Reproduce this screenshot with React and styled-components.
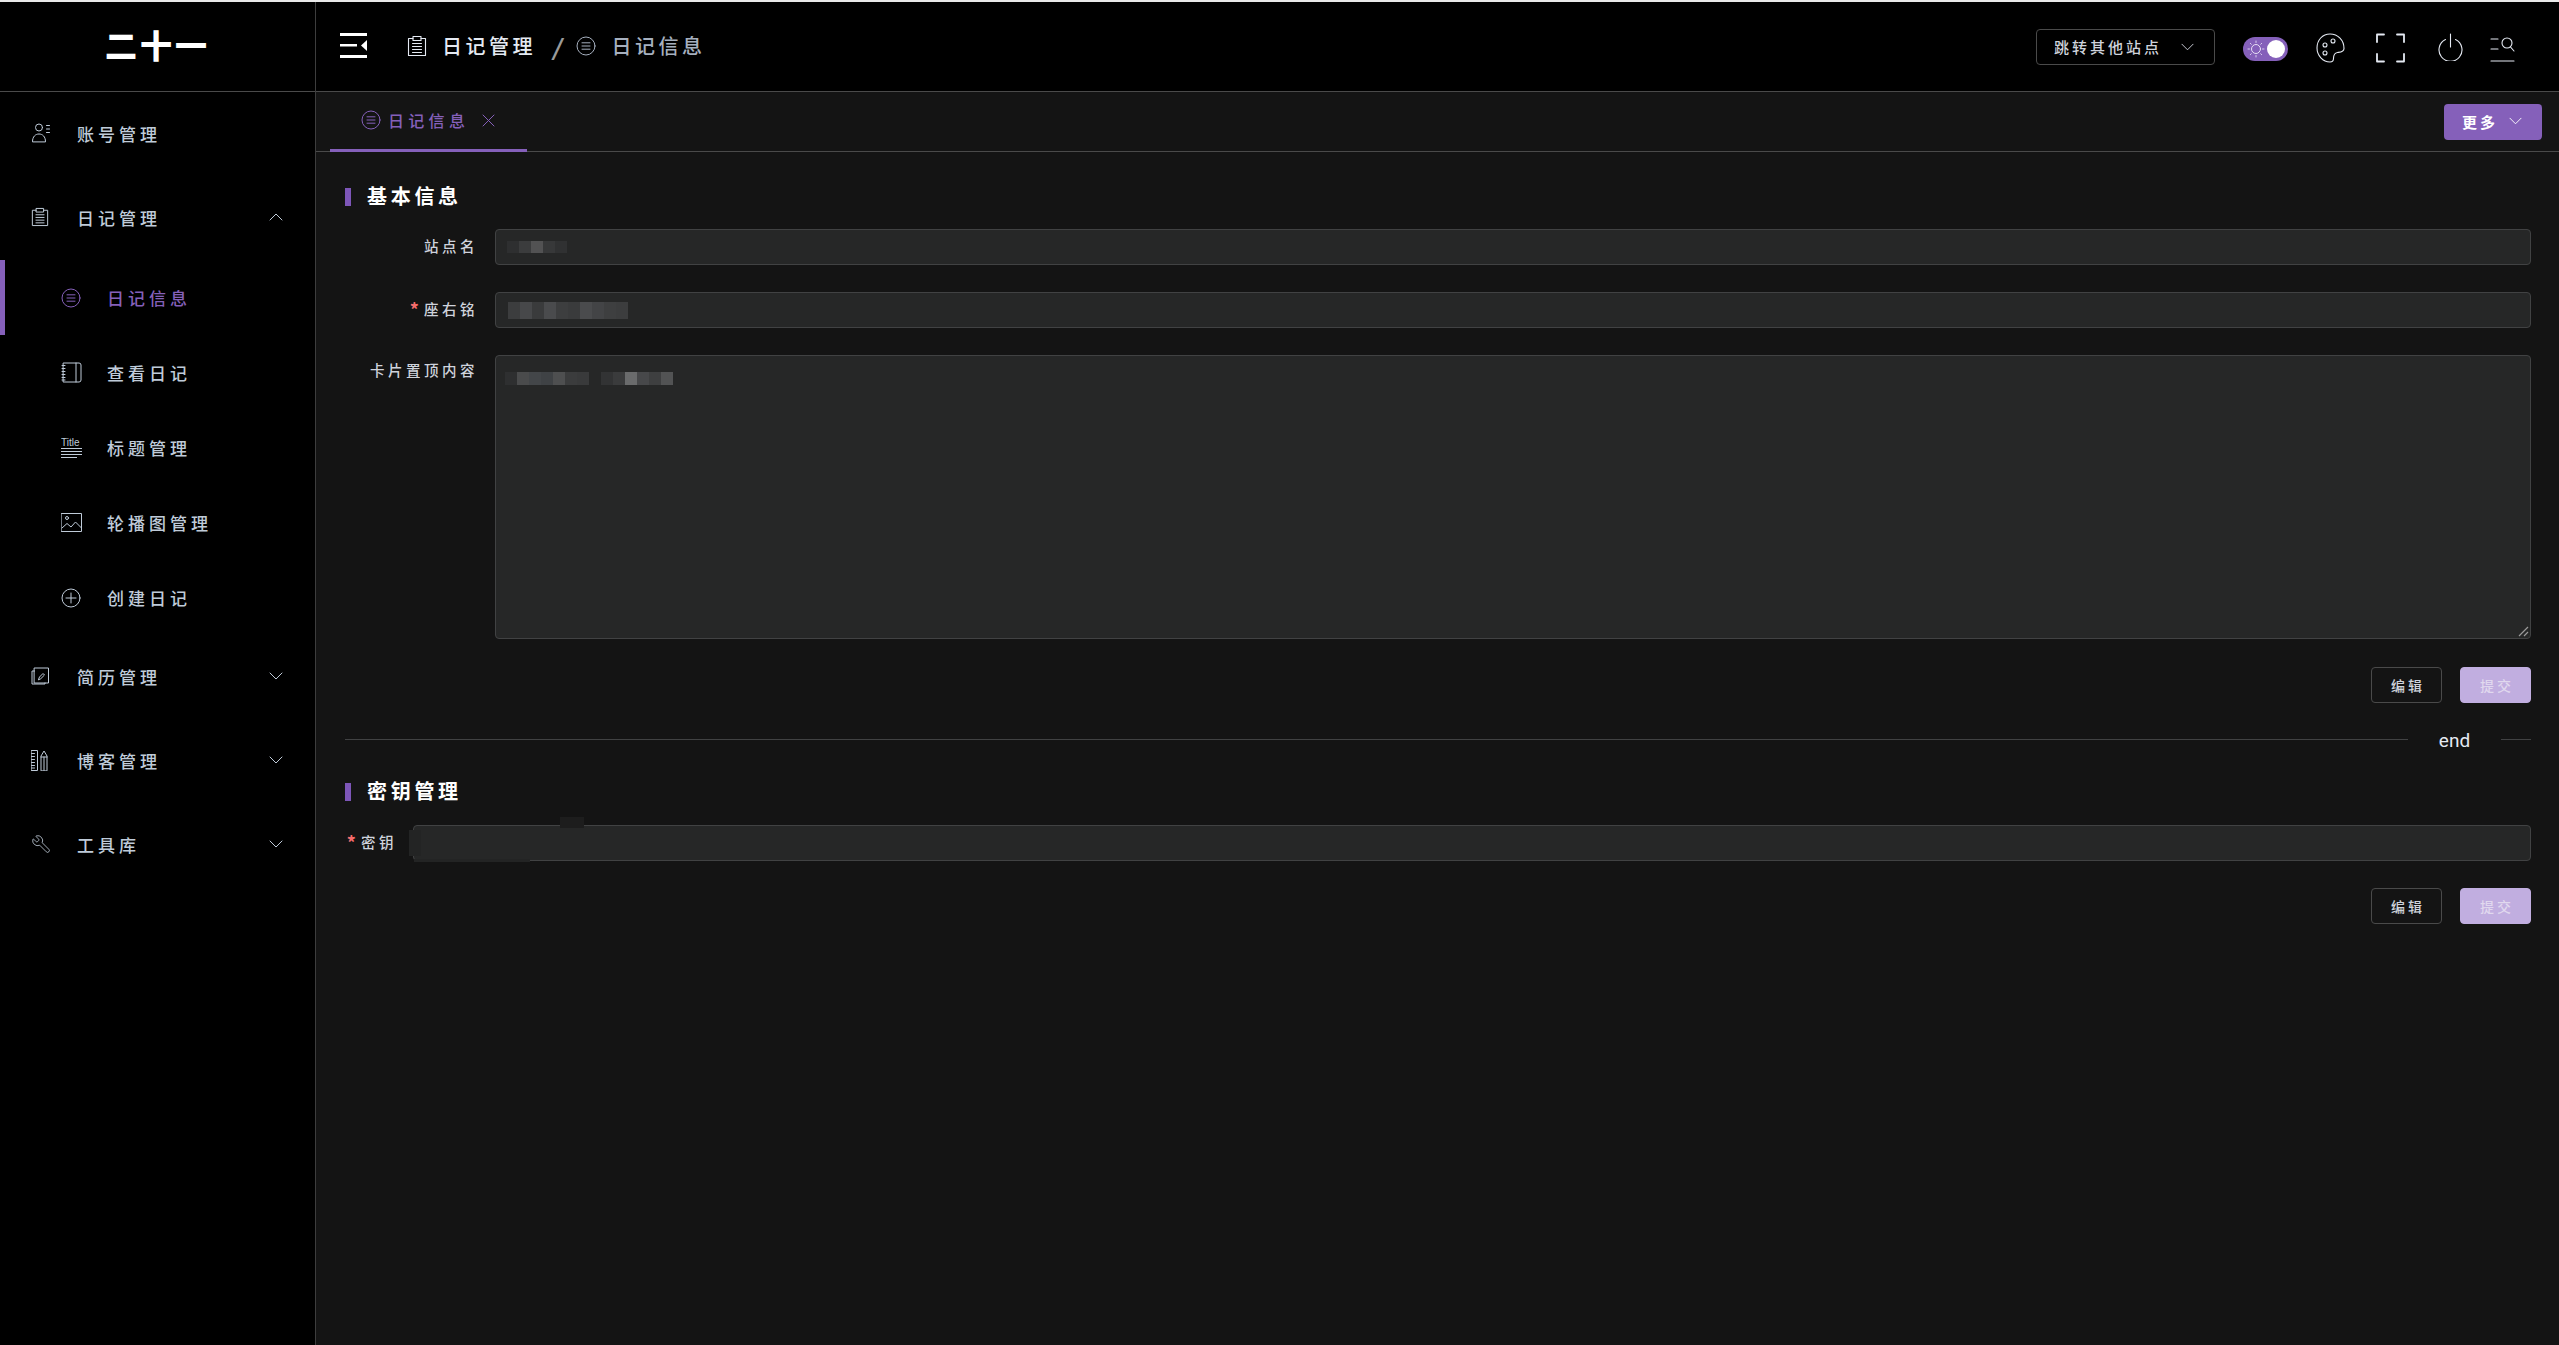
import styled, { createGlobalStyle } from "styled-components";
import { Wrench } from "lucide-react";

const FONT = `"Noto Sans CJK SC", "Noto Sans", sans-serif`;
const PURPLE = "#8560ba";

const GlobalStyle = createGlobalStyle`
  html, body {
    margin: 0;
    padding: 0;
    height: 100%;
    background: #000;
    overflow: hidden;
    font-family: ${FONT};
  }
  * { box-sizing: border-box; }
`;

const Page = styled.div`
  height: 100vh;
  border-top: 2px solid #e9e9e9;
  display: flex;
`;

const Sidebar = styled.aside`
  width: 316px;
  flex: none;
  background: #000;
  border-right: 1px solid #3d3d3d;
`;

const Logo = styled.div`
  height: 90px;
  border-bottom: 1px solid #4a4a4a;
  display: flex;
  align-items: center;
  justify-content: center;
  padding-bottom: 6px;
  color: #fff;
  font-size: 32px;
  font-weight: 900;
  letter-spacing: 3px;
  line-height: 1;
`;

const MenuRow = styled.div`
  height: 84px;
  display: flex;
  align-items: center;
  padding: 0 32px 2px 31px;
  color: #bfcbd9;
`;

const IconSlot = styled.span`
  width: 46px;
  flex: none;
  display: flex;
  align-items: center;
`;

const MenuText = styled.span`
  flex: 1;
  font-size: 17px;
  font-weight: 500;
  letter-spacing: 4px;
  line-height: 1;
`;

const SubRow = styled.div`
  height: 75px;
  display: flex;
  align-items: center;
  color: ${(p) => (p.$active ? PURPLE : "#bfcbd9")};
  border-left: ${(p) => (p.$active ? `5px solid ${PURPLE}` : "none")};
  padding-left: ${(p) => (p.$active ? "56px" : "61px")};
`;

const Main = styled.div`
  flex: 1;
  min-width: 0;
  display: flex;
  flex-direction: column;
  background: #141414;
`;

const Header = styled.header`
  height: 90px;
  flex: none;
  background: #000;
  color: #e5eaf3;
  border-bottom: 1px solid #4a4a4a;
  display: flex;
  align-items: center;
  padding: 0 0 2px 24px;
`;

const Crumbs = styled.div`
  display: flex;
  align-items: center;
  margin-left: 40px;
  flex: 1;
`;

const CrumbText = styled.span`
  font-size: 20px;
  font-weight: 500;
  letter-spacing: 3.5px;
  line-height: 1;
  margin-left: 15px;
  color: ${(p) => (p.$dim ? "#a6b0bf" : "#e5eaf3")};
`;

const CrumbIcon = styled.span`
  display: flex;
  color: #a6b0bf;
`;

const Slash = styled.span`
  font-size: 22px;
  font-weight: 900;
  line-height: 1;
  color: #9a9a9a;
  margin: 0 16px 0 16px;
  font-style: italic;
`;

const Tools = styled.div`
  display: flex;
  align-items: center;
  padding-right: 44px;
`;

const SiteSelect = styled.div`
  width: 179px;
  height: 36px;
  border: 1px solid #4a4a4a;
  border-radius: 4px;
  display: flex;
  align-items: center;
  justify-content: space-between;
  padding: 0 20px 0 17px;
  color: #cfd3dc;
  font-size: 15px;
  font-weight: 500;
  letter-spacing: 3px;
  margin: 2px 28px 0 0;
`;

const Toggle = styled.div`
  position: relative;
  width: 45px;
  height: 24px;
  border-radius: 12px;
  background: ${PURPLE};
  margin: 6px 28px 0 0;
  display: flex;
  align-items: center;
  padding-left: 4px;
`;

const Knob = styled.span`
  position: absolute;
  right: 3px;
  top: 3px;
  width: 18px;
  height: 18px;
  border-radius: 50%;
  background: #fff;
`;

const ToolIcon = styled.span`
  display: flex;
  margin-right: ${(p) => p.$gap}px;
  margin-top: ${(p) => p.$top}px;
`;

const TabBar = styled.div`
  height: 60px;
  flex: none;
  border-bottom: 1px solid #4a4a4a;
  display: flex;
  align-items: stretch;
  justify-content: space-between;
  padding: 0 17px 0 14px;
`;

const Tab = styled.div`
  width: 197px;
  height: 60px;
  border-bottom: 3px solid ${PURPLE};
  color: ${PURPLE};
  display: flex;
  align-items: center;
  padding: 0 0 1px 31px;
`;

const TabText = styled.span`
  font-size: 16px;
  font-weight: 500;
  letter-spacing: 4.3px;
  line-height: 1;
  margin: 0 13px 0 7px;
`;

const MoreButton = styled.div`
  width: 98px;
  height: 36px;
  margin-top: 12px;
  border-radius: 4px;
  background: ${PURPLE};
  color: #fff;
  display: flex;
  align-items: center;
  padding: 0 0 2px 18px;
  font-size: 15px;
  font-weight: 700;
  letter-spacing: 3px;
  gap: 11px;
`;

const Content = styled.main`
  flex: 1;
  padding: 36px 28px 0 29px;
`;

const SectionTitle = styled.div`
  height: 18px;
  display: flex;
  align-items: center;
  border-left: 6px solid #7d56b8;
  padding: 0 0 3px 16px;
  margin-top: ${(p) => p.$top || 0}px;
  font-size: 20px;
  font-weight: 700;
  letter-spacing: 3.7px;
  color: #fff;
  line-height: 1;
`;

const Row = styled.div`
  display: flex;
  margin-top: ${(p) => p.$top}px;
`;

const Label = styled.label`
  width: ${(p) => p.$width}px;
  flex: none;
  padding-top: ${(p) => (p.$tall ? 5 : 0)}px;
  padding-bottom: ${(p) => (p.$tall ? 0 : 2)}px;
  height: ${(p) => (p.$tall ? "auto" : "36px")};
  display: flex;
  align-items: ${(p) => (p.$tall ? "flex-start" : "center")};
  justify-content: flex-end;
  white-space: nowrap;
  color: #cfd3dc;
  font-size: 14.5px;
  font-weight: 500;
  letter-spacing: 3.5px;
  line-height: 1.4;
  margin-right: ${(p) => p.$gap}px;
`;

const Star = styled.span`
  color: #f56c6c;
  font-size: 18px;
  font-weight: 700;
  line-height: 1;
  margin-right: 5px;
  letter-spacing: 0;
`;

const Field = styled.div`
  position: relative;
  flex: 1;
  height: ${(p) => p.$height}px;
  background: #262727;
  border: 1px solid #414243;
  border-radius: 4px;
  padding: ${(p) => p.$pad};
  display: flex;
  align-items: flex-start;
`;

const Mosaic = styled.div`
  display: flex;
  height: ${(p) => p.$h}px;
`;

const Cell = styled.span`
  width: 12px;
  height: 100%;
  background: ${(p) => p.$c};
`;

const Resizer = styled.svg`
  position: absolute;
  right: 1px;
  bottom: 1px;
`;

const Smudge = styled.span`
  position: absolute;
  left: ${(p) => p.$l}px;
  top: ${(p) => p.$t}px;
  width: ${(p) => p.$w}px;
  height: ${(p) => p.$h}px;
  background: ${(p) => p.$c};
`;

const Actions = styled.div`
  display: flex;
  justify-content: flex-end;
  gap: 18px;
  margin-top: ${(p) => p.$top}px;
`;

const Button = styled.div`
  width: 71px;
  height: 36px;
  border-radius: 4px;
  display: flex;
  align-items: center;
  justify-content: center;
  font-size: 14px;
  font-weight: 500;
  letter-spacing: 3px;
  padding: 0 0 1px 3px;
  color: ${(p) => (p.$primary ? "#e0d8ee" : "#cfd3dc")};
  background: ${(p) => (p.$primary ? "#c1aee0" : "transparent")};
  border: 1px solid ${(p) => (p.$primary ? "#c1aee0" : "#4a4a4a")};
`;

const Divider = styled.div`
  display: flex;
  align-items: center;
  margin-top: 26px;
  height: 20px;
`;

const Line = styled.span`
  height: 1px;
  background: #414243;
  flex: ${(p) => (p.$fixed ? "none" : 1)};
  width: ${(p) => (p.$fixed ? "30px" : "auto")};
`;

const DividerText = styled.span`
  width: 93px;
  text-align: center;
  font-family: "Roboto", "Liberation Sans", sans-serif;
  font-size: 19px;
  color: #e5eaf3;
  padding: 3px 0 0 0;
  line-height: 1;
`;

const MirroredWrench = styled(Wrench)`
  transform: scaleX(-1);
`;

const Svg = ({ size = 20, w, h, vb = "0 0 24 24", sw = 1.2, children }) => (
  <svg
    width={w || size}
    height={h || size}
    viewBox={vb}
    fill="none"
    stroke="currentColor"
    strokeWidth={sw}
    strokeLinecap="round"
    strokeLinejoin="round"
  >
    {children}
  </svg>
);

const Chevron = ({ up, w = 14 }) => (
  <Svg w={w} h={8} vb="0 0 14 8" sw={1}>
    <path d={up ? "M1 7l6-6 6 6" : "M1 1l6 6 6-6"} />
  </Svg>
);

const CloseIcon = () => (
  <Svg size={13} vb="0 0 13 13" sw={1}>
    <path d="M1 1l11 11M12 1L1 12" />
  </Svg>
);

const UserListIcon = () => (
  <Svg size={20} vb="0 0 20 20" sw={1}>
    <circle cx="8" cy="4.500" r="3.500" />
    <path d="M1.500 18.500c0-5 3-7.500 6.500-7.500s6.500 2.500 6.500 7.500z" />
    <path d="M15.500 2.500h3M15.500 6h3M15.500 9.500h3" />
  </Svg>
);

const ClipboardIcon = ({ w = 18, h = 20 }) => (
  <Svg w={w} h={h} vb="0 0 20 22" sw={1.1}>
    <path d="M6 3.500H1.500v17h17v-17H14" />
    <path d="M6 1.500h8v4H6z" />
    <path d="M5.500 8.500h9M5.500 11.500h9M5.500 14.500h9M5.500 17.500h9" />
  </Svg>
);

const CircleListIcon = ({ size = 20 }) => (
  <Svg size={size} vb="0 0 20 20" sw={1}>
    <circle cx="10" cy="10" r="9" />
    <path d="M6 6.800h8M6 10h8M6 13.200h8" />
  </Svg>
);

const NotebookIcon = () => (
  <Svg size={21} vb="0 0 21 21" sw={1}>
    <path d="M2.500 1h15.500a2 2 0 0 1 2 2v15a2 2 0 0 1-2 2H2.500z" />
    <path d="M15 1v19" />
    <path d="M1 3.500h3M1 6.500h3M1 9.500h3M1 12.500h3M1 15.500h3M1 18h3" />
  </Svg>
);

const TitleIcon = () => (
  <svg width="21" height="20" viewBox="0 0 21 20">
    <text x="0" y="8" fontFamily="Liberation Sans, sans-serif" fontSize="10" fill="currentColor">
      Title
    </text>
    <path d="M0 10.500h21M0 13.500h21M0 16.500h21M0 19.500h16" stroke="currentColor" strokeWidth="1" />
  </svg>
);

const ImageIcon = () => (
  <Svg w={21} h={19} vb="0 0 21 19" sw={1}>
    <rect x="0.500" y="0.500" width="20" height="18" />
    <circle cx="6" cy="5" r="1.500" />
    <path d="M1 15l5-4.500 4 3.500 4.500-5 6 6" />
  </Svg>
);

const PlusCircleIcon = () => (
  <Svg size={20} vb="0 0 20 20" sw={1}>
    <circle cx="10" cy="10" r="9" />
    <path d="M10 5v10M5 10h10" />
  </Svg>
);

const ResumeIcon = () => (
  <Svg size={18} vb="0 0 18 18" sw={1}>
    <path d="M3.500 1h14v15h-14z" />
    <path d="M3.500 4H1v13h13v-1" />
    <path d="M7.500 12.500l1-2.500 3.500-3.500 1.500 1.500L10 11.500z" />
  </Svg>
);

const RulerIcon = () => (
  <Svg w={17} h={21} vb="0 0 17 21" sw={1}>
    <path d="M0.500 0.500h6v20h-6z" />
    <path d="M0.500 3.500h3M0.500 6.500h3M0.500 9.500h3M0.500 12.500h3M0.500 15.500h3M0.500 18h3" />
    <path d="M10 20.500V6l3-5 3 5v14.500zM10 7h6M13 7v13.500" />
  </Svg>
);

const HamburgerIcon = () => (
  <svg width="27" height="25" viewBox="0 0 27 25" fill="#fff">
    <rect width="27" height="3" />
    <rect y="11" width="17" height="2.500" />
    <rect y="22" width="27" height="3" />
    <path d="M27 7v11l-6-5.500z" />
  </svg>
);

const SunIcon = () => (
  <Svg size={18} vb="0 0 18 18" sw={1}>
    <circle cx="9" cy="9" r="4.500" stroke="#e8e0f4" />
    <path
      stroke="#d9cdee"
      d="M9 1v1.500M9 15.500V17M1 9h1.500M15.500 9H17M3.300 3.300l1 1M13.700 13.700l1 1M3.300 14.700l1-1M13.700 4.300l1-1"
    />
  </Svg>
);

const PaletteIcon = () => (
  <Svg w={29} h={30} vb="0 0 29 30" sw={1.1}>
    <path d="M14 1C6.500 1 1 7 1 15c0 7.500 6 14 13 14 3 0 3.500-1.500 3.500-3.500s.5-5.500 4-6c3-.4 6.500-.5 6.500-4C28 7 22 1 14 1z" />
    <circle cx="9" cy="12" r="2" />
    <circle cx="17" cy="8" r="2" />
    <circle cx="9" cy="20" r="2" />
  </Svg>
);

const FullscreenIcon = () => (
  <Svg w={29} h={30} vb="0 0 29 30" sw={1.8}>
    <path d="M1 9V1.500h7M21 1.500h7V9M1 21v7.500h7M21 28.500h7V21" />
  </Svg>
);

const PowerIcon = () => (
  <Svg w={25} h={28} vb="0 0 25 28" sw={1.1}>
    <path d="M12.500 1v13" />
    <path d="M7.500 6.500a11.500 11.500 0 1 0 10 0" />
  </Svg>
);

const SearchListIcon = () => (
  <Svg w={25} h={25} vb="0 0 25 25" sw={1.1}>
    <path d="M1 2h7M1 12h7M1 24h23" />
    <circle cx="17" cy="6" r="5" />
    <path d="M20.500 10l3.500 4" />
  </Svg>
);

const menuTop = (icon, text, chevron) => (
  <MenuRow key={text}>
    <IconSlot>{icon}</IconSlot>
    <MenuText>{text}</MenuText>
    {chevron && <Chevron up={chevron === "up"} />}
  </MenuRow>
);

const subItems = [
  { text: "日记信息", icon: <CircleListIcon />, active: true },
  { text: "查看日记", icon: <NotebookIcon /> },
  { text: "标题管理", icon: <TitleIcon /> },
  { text: "轮播图管理", icon: <ImageIcon /> },
  { text: "创建日记", icon: <PlusCircleIcon /> },
];

const App = () => {
  return (
    <>
      <GlobalStyle />
      <Page>
        <Sidebar>
          <Logo>二十一</Logo>
          {menuTop(<UserListIcon />, "账号管理")}
          {menuTop(<ClipboardIcon />, "日记管理", "up")}
          {subItems.map((item) => (
            <SubRow key={item.text} $active={item.active}>
              <IconSlot>{item.icon}</IconSlot>
              <MenuText>{item.text}</MenuText>
            </SubRow>
          ))}
          {menuTop(<ResumeIcon />, "简历管理", "down")}
          {menuTop(<RulerIcon />, "博客管理", "down")}
          {menuTop(<MirroredWrench size={20} strokeWidth={1} />, "工具库", "down")}
        </Sidebar>
        <Main>
          <Header>
            <HamburgerIcon />
            <Crumbs>
              <ClipboardIcon w={20} h={22} />
              <CrumbText>日记管理</CrumbText>
              <Slash>/</Slash>
              <CrumbIcon>
                <CircleListIcon />
              </CrumbIcon>
              <CrumbText $dim>日记信息</CrumbText>
            </Crumbs>
            <Tools>
              <SiteSelect>
                跳转其他站点
                <Chevron w={13} />
              </SiteSelect>
              <Toggle>
                <SunIcon />
                <Knob />
              </Toggle>
              <ToolIcon $gap={31} $top={4}>
                <PaletteIcon />
              </ToolIcon>
              <ToolIcon $gap={33} $top={4}>
                <FullscreenIcon />
              </ToolIcon>
              <ToolIcon $gap={27} $top={2}>
                <PowerIcon />
              </ToolIcon>
              <ToolIcon $gap={0} $top={8}>
                <SearchListIcon />
              </ToolIcon>
            </Tools>
          </Header>
          <TabBar>
            <Tab>
              <CircleListIcon />
              <TabText>日记信息</TabText>
              <CloseIcon />
            </Tab>
            <MoreButton>
              更多
              <Chevron w={13} />
            </MoreButton>
          </TabBar>
          <Content>
            <SectionTitle>基本信息</SectionTitle>
            <Row $top={23}>
              <Label $width={133} $gap={17}>站点名</Label>
              <Field $height={36} $pad="11px 0 0 11px">
                <Mosaic $h={12}>
                  <Cell $c="#2e2f30" />
                  <Cell $c="#3b3c3d" />
                  <Cell $c="#525253" />
                  <Cell $c="#373839" />
                  <Cell $c="#303132" />
                </Mosaic>
              </Field>
            </Row>
            <Row $top={27}>
              <Label $width={133} $gap={17}>
                <Star>*</Star>座右铭
              </Label>
              <Field $height={36} $pad="9px 0 0 12px">
                <Mosaic $h={17}>
                  <Cell $c="#3c3d3e" />
                  <Cell $c="#47484a" />
                  <Cell $c="#3a3b3c" />
                  <Cell $c="#4a4b4d" />
                  <Cell $c="#3d3e3f" />
                  <Cell $c="#3a3b3c" />
                  <Cell $c="#4a4b4d" />
                  <Cell $c="#434446" />
                  <Cell $c="#3e3f40" />
                  <Cell $c="#3c3d3e" />
                </Mosaic>
              </Field>
            </Row>
            <Row $top={27}>
              <Label $width={133} $gap={17} $tall>卡片置顶内容</Label>
              <Field $height={284} $pad="16px 0 0 9px">
                <Mosaic $h={13}>
                  <Cell $c="#2e2f30" />
                  <Cell $c="#4a4b4c" />
                  <Cell $c="#434649" />
                  <Cell $c="#3f4245" />
                  <Cell $c="#4e4f50" />
                  <Cell $c="#3b3c3d" />
                  <Cell $c="#393a3b" />
                  <Cell $c="#262727" />
                  <Cell $c="#323334" />
                  <Cell $c="#3a3b3c" />
                  <Cell $c="#6a6b6c" />
                  <Cell $c="#47484a" />
                  <Cell $c="#3e3f40" />
                  <Cell $c="#525354" />
                </Mosaic>
                <Resizer width="11" height="11" viewBox="0 0 11 11" stroke="#9a9a9a" strokeWidth="1.2">
                  <path d="M1 10L10 1M6 10l4-4" />
                </Resizer>
              </Field>
            </Row>
            <Actions $top={28}>
              <Button>编辑</Button>
              <Button $primary>提交</Button>
            </Actions>
            <Divider>
              <Line />
              <DividerText>end</DividerText>
              <Line $fixed />
            </Divider>
            <SectionTitle $top={34}>密钥管理</SectionTitle>
            <Row $top={24}>
              <Label $width={52} $gap={16}>
                <Star>*</Star>密钥
              </Label>
              <Field $height={36} $pad="0">
                <Smudge $l={-5} $t={4} $w={12} $h={26} $c="#232424" />
                <Smudge $l={146} $t={-9} $w={24} $h={11} $c="#1d1d1d" />
                <Smudge $l={0} $t={33} $w={116} $h={3} $c="#232424" />
              </Field>
            </Row>
            <Actions $top={27}>
              <Button>编辑</Button>
              <Button $primary>提交</Button>
            </Actions>
          </Content>
        </Main>
      </Page>
    </>
  );
};

export default App;
